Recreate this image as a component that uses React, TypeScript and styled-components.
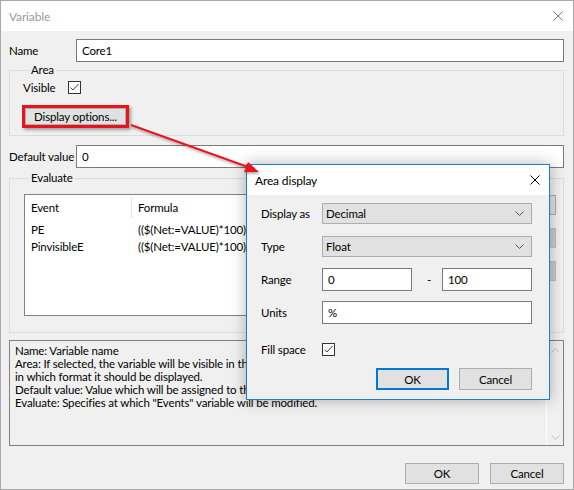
import styled, { createGlobalStyle } from "styled-components";

const GlobalStyle = createGlobalStyle`
  body {
    margin: 0;
    font-family: Lato, "Noto Sans", sans-serif;
    font-size: 11.5px;
    letter-spacing: -0.15px;
    color: #000;
  }
  * { box-sizing: border-box; }
`;

const Window = styled.div`
  position: relative;
  width: 574px;
  height: 490px;
  background: #f0f0f0;
  border: 1px solid #a9a9a9;
  display: flex;
  flex-direction: column;
  overflow: hidden;
`;

const TitleBar = styled.div<{ $active?: boolean }>`
  flex: none;
  height: 30px;
  background: #fff;
  display: flex;
  align-items: center;
  justify-content: space-between;
  padding: 0 ${(p) => (p.$active ? 9 : 10)}px 0 8px;
  color: ${(p) => (p.$active ? "#000" : "#999")};
  font-size: 12px;
`;

const Body = styled.div`
  flex: 1;
  display: flex;
  flex-direction: column;
  padding: 8px 9px 0 8px;
`;

const FieldRow = styled.div<{ $top?: number }>`
  display: grid;
  grid-template-columns: 67px 1fr;
  align-items: center;
  white-space: nowrap;
  margin-top: ${(p) => p.$top ?? 0}px;
`;

const TextBox = styled.div<{ $h?: number }>`
  height: ${(p) => p.$h ?? 23}px;
  background: #fff;
  border: 1px solid #7a7a7a;
  display: flex;
  align-items: center;
  padding-left: 5px;
`;

const GroupBox = styled.fieldset<{ $top: number; $pad: string }>`
  margin: ${(p) => p.$top}px 0 0 0;
  padding: ${(p) => p.$pad};
  border: 1px solid #dcdcdc;
  min-width: 0;
`;

const Legend = styled.legend<{ $indent: number }>`
  padding: 0 2px;
  margin-left: ${(p) => p.$indent}px;
  line-height: 14px;
`;

const CheckRow = styled.div<{ $gap: number }>`
  display: flex;
  align-items: center;
  gap: ${(p) => p.$gap}px;
  height: 13px;
`;

const Highlight = styled.div`
  align-self: flex-start;
  margin: 11px 0 0 -1px;
  border: 3px solid #e8141c;
  box-shadow: 2px 2px 3px rgba(0, 0, 0, 0.35);
`;

const Button = styled.div<{ $w: number; $h?: number; $default?: boolean; $disabled?: boolean }>`
  width: ${(p) => p.$w}px;
  height: ${(p) => p.$h ?? 21}px;
  display: flex;
  align-items: center;
  justify-content: center;
  white-space: nowrap;
  background: ${(p) => (p.$disabled ? "#cccccc" : "#e1e1e1")};
  border: ${(p) => (p.$default ? "2px solid #0078d7" : `1px solid ${p.$disabled ? "#bfbfbf" : "#adadad"}`)};
`;

const AreaContent = styled.div`
  display: flex;
  flex-direction: column;
`;

const EvalContent = styled.div`
  display: flex;
  gap: 10px;
`;

const ListView = styled.div`
  flex: 1;
  height: 122px;
  background: #fff;
  border: 1px solid #828282;
  overflow: hidden;
`;

const ListHeader = styled.div`
  display: flex;
  height: 25px;
  align-items: center;
`;

const HeaderCell = styled.div<{ $w?: number }>`
  width: ${(p) => (p.$w ? `${p.$w}px` : "auto")};
  flex: ${(p) => (p.$w ? "none" : 1)};
  padding-left: 6px;
  height: 21px;
  display: flex;
  align-items: center;
  border-right: ${(p) => (p.$w ? "1px solid #e5e5e5" : "none")};
`;

const ListRows = styled.div`
  padding-top: 1px;
`;

const ListRow = styled.div`
  display: flex;
  height: 17px;
  align-items: center;
`;

const Cell = styled.div<{ $w?: number }>`
  width: ${(p) => (p.$w ? `${p.$w}px` : "auto")};
  flex: ${(p) => (p.$w ? "none" : 1)};
  padding-left: 6px;
  white-space: nowrap;
`;

const SideButtons = styled.div`
  width: 75px;
  display: flex;
  flex-direction: column;
  padding-top: 1px;
  gap: 13px;
`;

const Description = styled.div`
  margin-top: 7px;
  height: 106px;
  border: 1px solid #828282;
  display: flex;
`;

const DescText = styled.div`
  flex: 1;
  padding: 3px 0 0 5px;
  line-height: 13px;
  white-space: nowrap;
  overflow: hidden;
`;

const ScrollBar = styled.div`
  width: 17px;
  border-left: 1px solid #fff;
  display: flex;
  flex-direction: column;
  justify-content: space-between;
  align-items: center;
  padding: 7px 0 5px;
`;

const Footer = styled.div`
  margin-top: 17px;
  display: flex;
  justify-content: flex-end;
  gap: 11px;
`;

const Dialog = styled.div`
  position: absolute;
  left: 245px;
  top: 163px;
  width: 304px;
  height: 236px;
  border: 1px solid #1a7fd4;
  background: #f0f0f0;
  box-shadow: 0 0 14px rgba(0, 0, 0, 0.3);
  display: flex;
  flex-direction: column;
  z-index: 1;
`;

const DialogBody = styled.div`
  display: flex;
  flex-direction: column;
  padding: 8px 17px 0 14px;
`;

const FormRow = styled.div<{ $top: number; $h: number }>`
  display: grid;
  grid-template-columns: 61px 1fr;
  align-items: center;
  height: ${(p) => p.$h}px;
  margin-top: ${(p) => p.$top}px;
`;

const Select = styled.div`
  height: 21px;
  background: #e1e1e1;
  border: 1px solid #adadad;
  display: flex;
  align-items: center;
  justify-content: space-between;
  padding: 0 7px 0 3px;
`;

const RangeFields = styled.div`
  display: grid;
  grid-template-columns: 90px 30px 1fr;
  align-items: center;
`;

const Dash = styled.span`
  text-align: center;
  margin-left: 4px;
`;

const DialogFooter = styled.div`
  margin-top: 12px;
  display: flex;
  justify-content: flex-end;
  gap: 10px;
`;

const Annotation = styled.svg`
  position: absolute;
  left: 0;
  top: 0;
  z-index: 2;
  pointer-events: none;
`;

function CloseIcon({ color }: { color: string }) {
  return (
    <svg width="10" height="10" viewBox="0 0 10 10">
      <path d="M0.5 0.5 L9.5 9.5 M9.5 0.5 L0.5 9.5" stroke={color} strokeWidth="1" fill="none" />
    </svg>
  );
}

function Checkbox() {
  return (
    <svg width="13" height="13" viewBox="0 0 13 13">
      <rect x="0.5" y="0.5" width="12" height="12" fill="#fff" stroke="#333" />
      <path d="M2.5 6.5 L5 9 L10.5 3" stroke="#444" strokeWidth="1" fill="none" />
    </svg>
  );
}

function Chevron({ color, up }: { color: string; up?: boolean }) {
  return (
    <svg width="9" height="5" viewBox="0 0 9 5">
      <path d={up ? "M0.5 4.5 L4.5 0.5 L8.5 4.5" : "M0.5 0.5 L4.5 4.5 L8.5 0.5"} stroke={color} fill="none" />
    </svg>
  );
}

const descLines = [
  "Name: Variable name",
  'Area: If selected, the variable will be visible in the area. "Display options" specify',
  "in which format it should be displayed.",
  "Default value: Value which will be assigned to the variable at start.",
  'Evaluate: Specifies at which "Events" variable will be modified.',
];

const events = ["PE", "PinvisibleE"];

export default function App() {
  return (
    <>
      <GlobalStyle />
      <Window>
        <TitleBar>
          <span>Variable</span>
          <CloseIcon color="#777" />
        </TitleBar>
        <Body>
          <FieldRow>
            <span>Name</span>
            <TextBox>Core1</TextBox>
          </FieldRow>
          <GroupBox $top={1} $pad="4px 12px 7px 13px">
            <Legend $indent={6}>Area</Legend>
            <AreaContent>
              <CheckRow $gap={13}>
                <span>Visible</span>
                <Checkbox />
              </CheckRow>
              <Highlight>
                <Button $w={101} $h={17}>Display options...</Button>
              </Highlight>
            </AreaContent>
          </GroupBox>
          <FieldRow $top={9}>
            <span>Default value</span>
            <TextBox>0</TextBox>
          </FieldRow>
          <GroupBox $top={3} $pad="9px 7px 16px 14px">
            <Legend $indent={5}>Evaluate</Legend>
            <EvalContent>
              <ListView>
                <ListHeader>
                  <HeaderCell $w={107}>Event</HeaderCell>
                  <HeaderCell>Formula</HeaderCell>
                </ListHeader>
                <ListRows>
                  {events.map((e) => (
                    <ListRow key={e}>
                      <Cell $w={107}>{e}</Cell>
                      <Cell>(($(Net:=VALUE)*100)/255)</Cell>
                    </ListRow>
                  ))}
                </ListRows>
              </ListView>
              <SideButtons>
                <Button $w={75} $h={20}>Add</Button>
                <Button $w={75} $h={20} $disabled>Edit</Button>
                <Button $w={75} $h={20} $disabled>Delete</Button>
              </SideButtons>
            </EvalContent>
          </GroupBox>
          <Description>
            <DescText>
              {descLines.map((l) => (
                <div key={l}>{l}</div>
              ))}
            </DescText>
            <ScrollBar>
              <Chevron color="#c2c2c2" up />
              <Chevron color="#c2c2c2" />
            </ScrollBar>
          </Description>
          <Footer>
            <Button $w={74}>OK</Button>
            <Button $w={74}>Cancel</Button>
          </Footer>
        </Body>

        <Dialog>
          <TitleBar $active>
            <span>Area display</span>
            <CloseIcon color="#000" />
          </TitleBar>
          <DialogBody>
            <FormRow $top={0} $h={21}>
              <span>Display as</span>
              <Select>
                <span>Decimal</span>
                <Chevron color="#555" />
              </Select>
            </FormRow>
            <FormRow $top={12} $h={21}>
              <span>Type</span>
              <Select>
                <span>Float</span>
                <Chevron color="#555" />
              </Select>
            </FormRow>
            <FormRow $top={11} $h={23}>
              <span>Range</span>
              <RangeFields>
                <TextBox>0</TextBox>
                <Dash>-</Dash>
                <TextBox>100</TextBox>
              </RangeFields>
            </FormRow>
            <FormRow $top={10} $h={23}>
              <span>Units</span>
              <TextBox>%</TextBox>
            </FormRow>
            <FormRow $top={18} $h={14}>
              <span>Fill space</span>
              <Checkbox />
            </FormRow>
            <DialogFooter>
              <Button $w={73} $h={22} $default>OK</Button>
              <Button $w={73} $h={22}>Cancel</Button>
            </DialogFooter>
          </DialogBody>
        </Dialog>

        <Annotation width="574" height="490" viewBox="0 0 574 490">
          <defs>
            <filter id="shadow" x="-10%" y="-10%" width="130%" height="140%">
              <feDropShadow dx="1" dy="2" stdDeviation="1" floodColor="#000" floodOpacity="0.3" />
            </filter>
          </defs>
          <g filter="url(#shadow)">
            <line x1="130" y1="124" x2="247" y2="166" stroke="#e8141c" strokeWidth="2" />
            <polygon points="258,171 243,171 247,161" fill="#e8141c" />
          </g>
        </Annotation>
      </Window>
    </>
  );
}
